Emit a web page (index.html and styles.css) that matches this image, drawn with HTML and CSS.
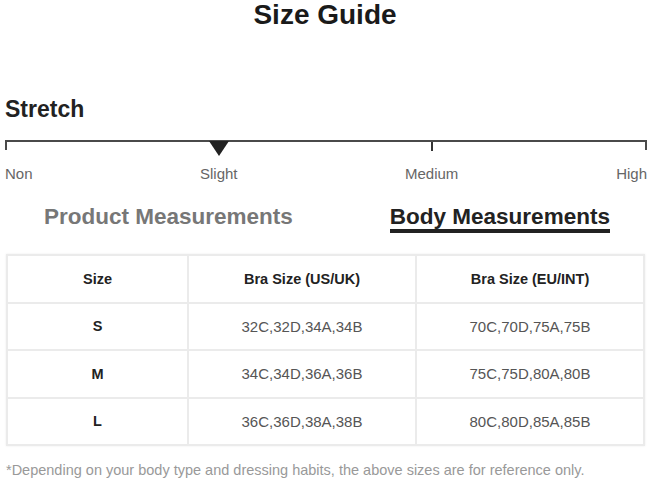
FILE: index.html
```html
<!DOCTYPE html>
<html>
<head>
<meta charset="utf-8">
<link rel="stylesheet" href="styles.css">
</head>
<body>
<div class="page">
  <h1 class="title">Size Guide</h1>
  <h2 class="section">Stretch</h2>
  <div class="scale">
    <div class="bar">
      <span class="tick tick-start"></span>
      <span class="tick tick-mid"></span>
      <span class="tick tick-end"></span>
      <svg class="pointer" width="20" height="15" viewBox="0 0 20 15"><polygon points="0,0 20,0 10,15" fill="#222"/></svg>
    </div>
    <div class="labels">
      <span class="lbl lbl-non">Non</span>
      <span class="lbl lbl-slight">Slight</span>
      <span class="lbl lbl-medium">Medium</span>
      <span class="lbl lbl-high">High</span>
    </div>
  </div>
  <div class="tabs">
    <div class="tab">Product Measurements</div>
    <div class="tab active">Body Measurements</div>
  </div>
  <table class="sizes">
    <thead>
      <tr><th class="c1">Size</th><th class="c2">Bra Size (US/UK)</th><th class="c3">Bra Size (EU/INT)</th></tr>
    </thead>
    <tbody>
      <tr><th>S</th><td>32C,32D,34A,34B</td><td>70C,70D,75A,75B</td></tr>
      <tr><th>M</th><td>34C,34D,36A,36B</td><td>75C,75D,80A,80B</td></tr>
      <tr><th>L</th><td>36C,36D,38A,38B</td><td>80C,80D,85A,85B</td></tr>
    </tbody>
  </table>
  <p class="note">*Depending on your body type and dressing habits, the above sizes are for reference only.</p>
</div>
</body>
</html>
```
FILE: styles.css
```css
html, body {
  margin: 0;
  padding: 0;
  background: #fff;
}
body {
  font-family: "Liberation Sans", Arial, sans-serif;
  color: #222;
}
.page {
  width: 648px;
  height: 484px;
  overflow: hidden;
  padding: 0 1px 0 5px;
  box-sizing: border-box;
}
.title {
  margin: 0;
  text-align: center;
  font-size: 28px;
  font-weight: bold;
  line-height: 30px;
  color: #1a1a1a;
  padding-right: 2px;
}
.section {
  margin: 66px 0 0;
  font-size: 23px;
  font-weight: bold;
  line-height: 26px;
  color: #222;
}
.scale {
  margin-top: 18px;
}
.bar {
  position: relative;
  height: 16px;
  border-top: 2px solid #4a4a4a;
}
.tick {
  position: absolute;
  top: 0;
  width: 2px;
  height: 8px;
  background: #4a4a4a;
}
.tick-start { left: 0; }
.tick-mid { left: 426px; height: 9px; background: #333; }
.tick-end { right: 0; }
.pointer {
  position: absolute;
  top: -1px;
  left: 204px;
}
.labels {
  display: flex;
  justify-content: space-between;
  font-size: 15px;
  color: #666;
  line-height: 18px;
  margin-top: 7px;
  position: relative;
}
.lbl-slight { position: absolute; left: 195px; }
.lbl-medium { position: absolute; left: 400px; }
.tabs {
  display: flex;
  margin-top: 20px;
  height: 51px;
}
.tab {
  font-size: 22.5px;
  font-weight: bold;
  color: #777;
  line-height: 27px;
  margin-left: 39px;
}
.tab.active {
  color: #222;
  margin-left: 97px;
  height: 26px;
  border-bottom: 4px solid #222;
}
.sizes {
  margin-left: 1px;
  width: 639px;
  border-collapse: collapse;
  table-layout: fixed;
  box-shadow: 0 0 2px rgba(0,0,0,0.08);
}
.sizes th, .sizes td {
  border: 2px solid #ebebeb;
  height: 45.5px;
  text-align: center;
  padding: 0;
  font-size: 14.5px;
}
.sizes th {
  font-weight: bold;
  color: #222;
}
.sizes td {
  color: #555;
  font-size: 15px;
}
.c1 { width: 179px; }
.c2 { width: 226px; }
.note {
  margin: 15px 0 0 1px;
  font-size: 14.5px;
  color: #999;
  line-height: 18px;
}
```
